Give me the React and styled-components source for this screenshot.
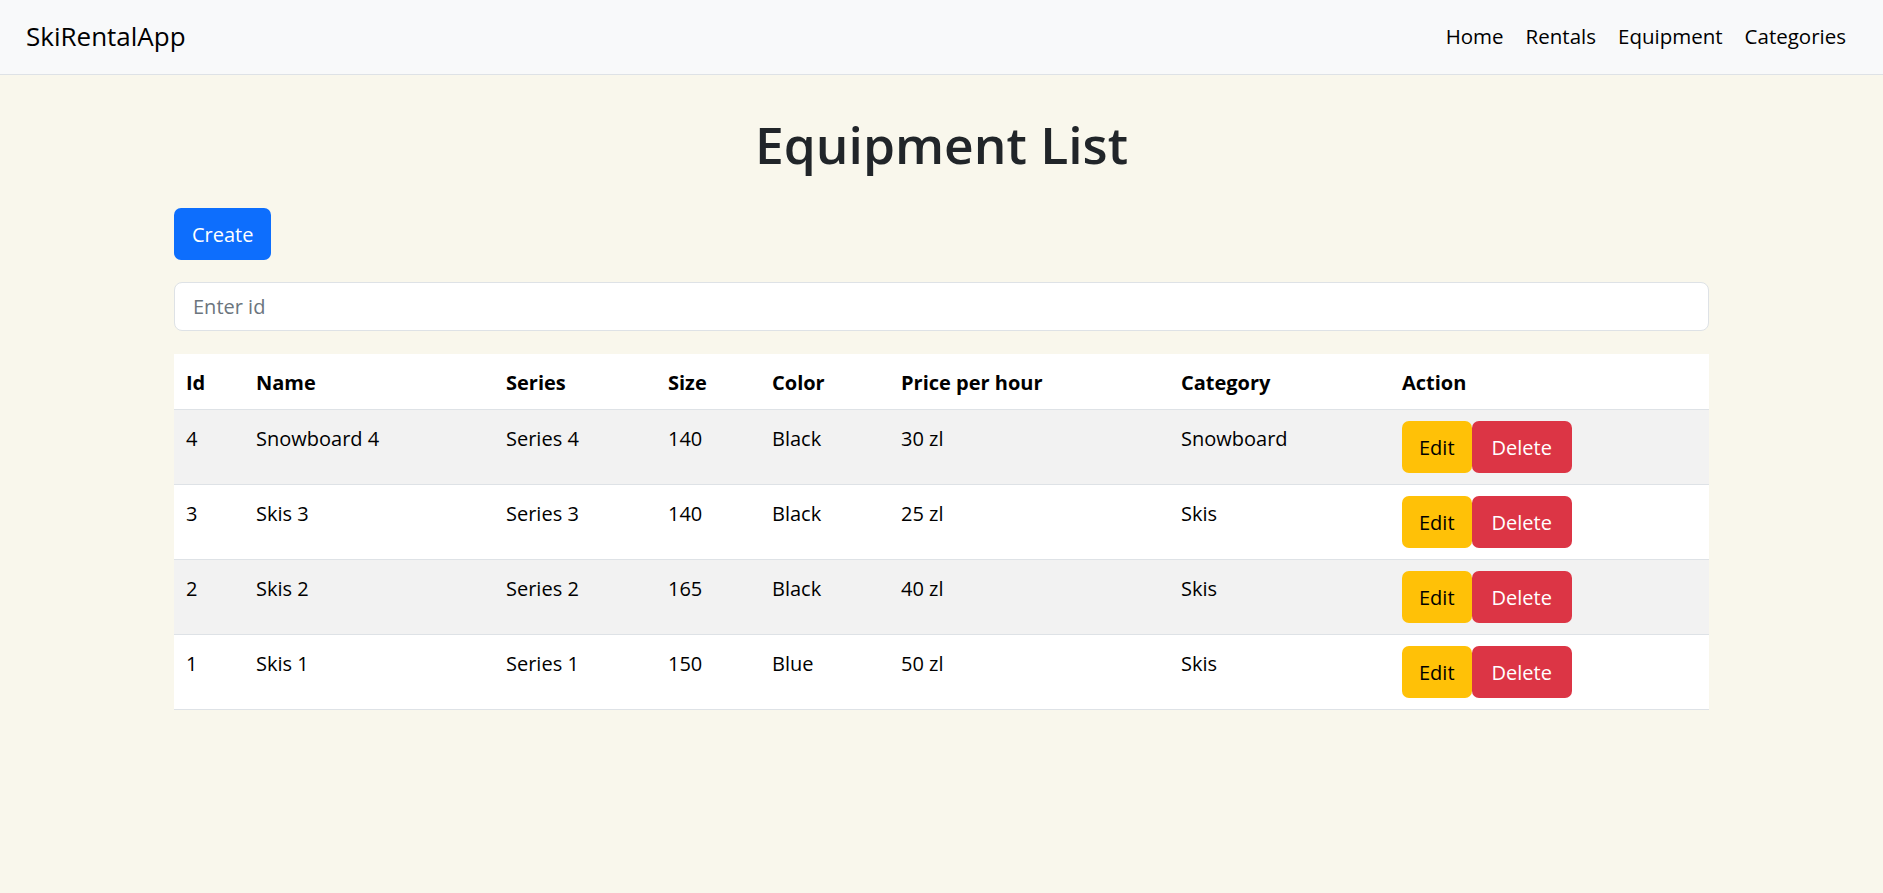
import React from 'react';
import styled, { createGlobalStyle } from 'styled-components';

const GlobalStyle = createGlobalStyle`
  * { box-sizing: border-box; }
  body {
    margin: 0;
    background: #f9f7ec;
    font-family: "Open Sans", "Noto Sans", sans-serif;
    color: #212529;
  }
`;

const NavBar = styled.nav`
  height: 75px;
  display: flex;
  align-items: center;
  justify-content: space-between;
  padding: 0 37px 0 26px;
  background: #f8f9fa;
  border-bottom: 1px solid #dee2e6;
`;

const Brand = styled.a`
  font-size: 26px;
  color: #000;
  text-decoration: none;
  margin-top: -2px;
`;

const NavLinks = styled.div`
  display: flex;
  gap: 22px;
`;

const NavLink = styled.a`
  font-size: 20.5px;
  color: #000;
  text-decoration: none;
  margin-top: -2px;
`;

const Main = styled.main`
  width: 1535px;
  margin: 0 auto;
  padding-top: 34px;
`;

const Title = styled.h1`
  margin: 0 0 29px;
  text-align: center;
  font-size: 51.5px;
  font-weight: 600;
  line-height: 70px;
  color: #212529;
`;

const Button = styled.button`
  height: 52px;
  padding: 0 ${p => p.$px || 18}px;
  border: none;
  border-radius: 7px;
  font-family: inherit;
  font-size: 20px;
  background: ${p => p.$bg};
  color: ${p => p.$fg};
  cursor: pointer;
`;

const SearchInput = styled.input`
  display: block;
  width: 100%;
  height: 49px;
  margin: 22px 0 23px;
  padding: 0 18px;
  border: 1px solid #dee2e6;
  border-radius: 8px;
  background: #fff;
  font-family: inherit;
  font-size: 20px;
  &::placeholder { color: #6c757d; }
`;

const Table = styled.table`
  width: 100%;
  table-layout: fixed;
  border-collapse: collapse;
  font-size: 20px;
  color: #000;
`;

const Row = styled.tr`
  background: ${p => (p.$striped ? '#f2f2f2' : '#fff')};
  border-bottom: 1px solid #dee2e6;
`;

const Th = styled.th`
  text-align: left;
  font-weight: 700;
  padding: 14px 12px 11px;
  line-height: 30px;
  vertical-align: top;
`;

const Td = styled.td`
  padding: ${p => (p.$action ? 11 : 14)}px 12px 11px;
  line-height: 30px;
  vertical-align: top;
`;

const Actions = styled.div`
  display: flex;
`;

const columns = [
  ['Id', 70],
  ['Name', 250],
  ['Series', 162],
  ['Size', 104],
  ['Color', 129],
  ['Price per hour', 280],
  ['Category', 221],
  ['Action', 319],
];

const equipment = [
  { id: 4, name: 'Snowboard 4', series: 'Series 4', size: 140, color: 'Black', price: '30 zl', category: 'Snowboard' },
  { id: 3, name: 'Skis 3', series: 'Series 3', size: 140, color: 'Black', price: '25 zl', category: 'Skis' },
  { id: 2, name: 'Skis 2', series: 'Series 2', size: 165, color: 'Black', price: '40 zl', category: 'Skis' },
  { id: 1, name: 'Skis 1', series: 'Series 1', size: 150, color: 'Blue', price: '50 zl', category: 'Skis' },
];

export default function App() {
  return (
    <>
      <GlobalStyle />
      <NavBar>
        <Brand href="#">SkiRentalApp</Brand>
        <NavLinks>
          <NavLink href="#">Home</NavLink>
          <NavLink href="#">Rentals</NavLink>
          <NavLink href="#">Equipment</NavLink>
          <NavLink href="#">Categories</NavLink>
        </NavLinks>
      </NavBar>
      <Main>
        <Title>Equipment List</Title>
        <Button $bg="#0d6efd" $fg="#fff">Create</Button>
        <SearchInput placeholder="Enter id" />
        <Table>
          <colgroup>
            {columns.map(([name, w]) => <col key={name} width={w} />)}
          </colgroup>
          <thead>
            <Row>
              {columns.map(([name]) => <Th key={name}>{name}</Th>)}
            </Row>
          </thead>
          <tbody>
            {equipment.map((item, i) => (
              <Row key={item.id} $striped={i % 2 === 0}>
                <Td>{item.id}</Td>
                <Td>{item.name}</Td>
                <Td>{item.series}</Td>
                <Td>{item.size}</Td>
                <Td>{item.color}</Td>
                <Td>{item.price}</Td>
                <Td>{item.category}</Td>
                <Td $action>
                  <Actions>
                    <Button $bg="#ffc107" $fg="#000" $px={17}>Edit</Button>
                    <Button $bg="#dc3545" $fg="#fff" $px={20}>Delete</Button>
                  </Actions>
                </Td>
              </Row>
            ))}
          </tbody>
        </Table>
      </Main>
    </>
  );
}
